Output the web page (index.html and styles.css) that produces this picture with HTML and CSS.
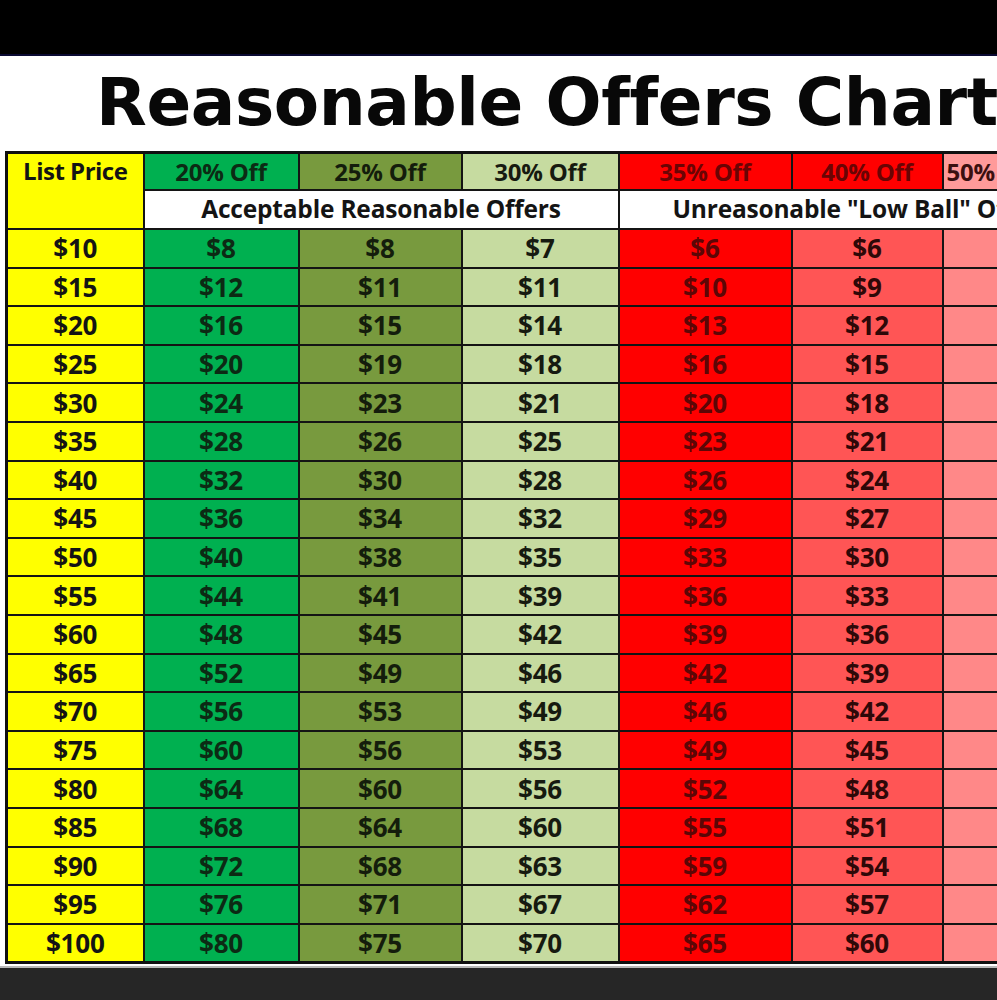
FILE: index.html
```html
<!DOCTYPE html>
<html lang="en">
<head>
<meta charset="utf-8">
<title>Reasonable Offers Chart</title>
<link rel="stylesheet" href="styles.css">
</head>
<body>
<div class="topbar"></div>
<main class="sheet">
  <h1 class="title">Reasonable Offers Chart</h1>
  <table class="chart">
    <colgroup>
      <col class="c-list"><col class="c20"><col class="c25"><col class="c30"><col class="c35"><col class="c40"><col class="c50">
    </colgroup>
    <thead>
      <tr class="h1row">
        <th class="list" rowspan="2">List Price</th>
        <th class="g20">20% Off</th>
        <th class="g25">25% Off</th>
        <th class="g30">30% Off</th>
        <th class="r35 hred">35% Off</th>
        <th class="r35 hred">40% Off</th>
        <th class="r50h left">50% Off</th>
      </tr>
      <tr class="h2row">
        <th class="sub" colspan="3">Acceptable Reasonable Offers</th>
        <th class="sub subleft" colspan="3">Unreasonable "Low Ball" Offers</th>
      </tr>
    </thead>
    <tbody>
      <tr><td class="list">$10</td><td class="g20">$8</td><td class="g25">$8</td><td class="g30">$7</td><td class="r35">$6</td><td class="r40">$6</td><td class="r50">$5</td></tr>
      <tr><td class="list">$15</td><td class="g20">$12</td><td class="g25">$11</td><td class="g30">$11</td><td class="r35">$10</td><td class="r40">$9</td><td class="r50">$8</td></tr>
      <tr><td class="list">$20</td><td class="g20">$16</td><td class="g25">$15</td><td class="g30">$14</td><td class="r35">$13</td><td class="r40">$12</td><td class="r50">$10</td></tr>
      <tr><td class="list">$25</td><td class="g20">$20</td><td class="g25">$19</td><td class="g30">$18</td><td class="r35">$16</td><td class="r40">$15</td><td class="r50">$13</td></tr>
      <tr><td class="list">$30</td><td class="g20">$24</td><td class="g25">$23</td><td class="g30">$21</td><td class="r35">$20</td><td class="r40">$18</td><td class="r50">$15</td></tr>
      <tr><td class="list">$35</td><td class="g20">$28</td><td class="g25">$26</td><td class="g30">$25</td><td class="r35">$23</td><td class="r40">$21</td><td class="r50">$18</td></tr>
      <tr><td class="list">$40</td><td class="g20">$32</td><td class="g25">$30</td><td class="g30">$28</td><td class="r35">$26</td><td class="r40">$24</td><td class="r50">$20</td></tr>
      <tr><td class="list">$45</td><td class="g20">$36</td><td class="g25">$34</td><td class="g30">$32</td><td class="r35">$29</td><td class="r40">$27</td><td class="r50">$23</td></tr>
      <tr><td class="list">$50</td><td class="g20">$40</td><td class="g25">$38</td><td class="g30">$35</td><td class="r35">$33</td><td class="r40">$30</td><td class="r50">$25</td></tr>
      <tr><td class="list">$55</td><td class="g20">$44</td><td class="g25">$41</td><td class="g30">$39</td><td class="r35">$36</td><td class="r40">$33</td><td class="r50">$28</td></tr>
      <tr><td class="list">$60</td><td class="g20">$48</td><td class="g25">$45</td><td class="g30">$42</td><td class="r35">$39</td><td class="r40">$36</td><td class="r50">$30</td></tr>
      <tr><td class="list">$65</td><td class="g20">$52</td><td class="g25">$49</td><td class="g30">$46</td><td class="r35">$42</td><td class="r40">$39</td><td class="r50">$33</td></tr>
      <tr><td class="list">$70</td><td class="g20">$56</td><td class="g25">$53</td><td class="g30">$49</td><td class="r35">$46</td><td class="r40">$42</td><td class="r50">$35</td></tr>
      <tr><td class="list">$75</td><td class="g20">$60</td><td class="g25">$56</td><td class="g30">$53</td><td class="r35">$49</td><td class="r40">$45</td><td class="r50">$38</td></tr>
      <tr><td class="list">$80</td><td class="g20">$64</td><td class="g25">$60</td><td class="g30">$56</td><td class="r35">$52</td><td class="r40">$48</td><td class="r50">$40</td></tr>
      <tr><td class="list">$85</td><td class="g20">$68</td><td class="g25">$64</td><td class="g30">$60</td><td class="r35">$55</td><td class="r40">$51</td><td class="r50">$43</td></tr>
      <tr><td class="list">$90</td><td class="g20">$72</td><td class="g25">$68</td><td class="g30">$63</td><td class="r35">$59</td><td class="r40">$54</td><td class="r50">$45</td></tr>
      <tr><td class="list">$95</td><td class="g20">$76</td><td class="g25">$71</td><td class="g30">$67</td><td class="r35">$62</td><td class="r40">$57</td><td class="r50">$48</td></tr>
      <tr><td class="list">$100</td><td class="g20">$80</td><td class="g25">$75</td><td class="g30">$70</td><td class="r35">$65</td><td class="r40">$60</td><td class="r50">$50</td></tr>
    </tbody>
  </table>
</main>
<div class="bottombar"></div>
</body>
</html>
```

FILE: styles.css
```css
html, body {
  margin: 0;
  padding: 0;
  background: #ffffff;
}
body {
  width: 997px;
  height: 1000px;
  overflow: hidden;
}
.topbar {
  height: 54px;
  background: #000000;
  border-bottom: 2px solid #0a0a32;
  box-shadow: 0 1px 0 #c8c8d0;
}
.sheet {
  background: #ffffff;
  padding: 0 0 0 5px;
  overflow: hidden;
  height: 910px;
}
.title {
  margin: 0;
  padding: 12px 0 0 91px;
  height: 95px;
  box-sizing: border-box;
  font-family: "DejaVu Sans", "Lato", sans-serif;
  font-weight: 700;
  font-size: 66px;
  line-height: 70px;
  color: #080808;
  white-space: nowrap;
  letter-spacing: -0.4px;
}
.chart {
  border-collapse: collapse;
  table-layout: fixed;
  width: 1100px;
  border: 3px solid #101010;
  font-family: "Open Sans", "Liberation Sans", sans-serif;
  font-weight: 700;
  font-size: 26px;
  color: #141414;
}
.c-list { width: 137px; }
.c20 { width: 155px; }
.c25 { width: 163px; }
.c30 { width: 157px; }
.c35 { width: 173px; }
.c40 { width: 151px; }
.c50 { width: 164px; }
.chart th, .chart td {
  border: 2px solid #141414;
  padding: 0;
  text-align: center;
  white-space: nowrap;
  overflow: hidden;
  line-height: 1;
}
.chart th { font-weight: 700; font-size: 24px; letter-spacing: -0.2px; }
.chart td { letter-spacing: -0.2px; }
.h1row th { height: 35px; }
.h2row th { height: 37px; }
.chart tbody td { height: 36.6px; }
.list { background: #ffff00; vertical-align: top; }
.chart thead .list { padding-top: 5px; vertical-align: top; letter-spacing: -0.5px; }
.chart tbody .list { vertical-align: middle; }
.g20 { background: #00b050; color: #0c2a14; }
.g25 { background: #789a3e; color: #141d0c; }
.g30 { background: #c6dba0; color: #161a10; }
.r35 { background: #ff0000; color: #5c0606; }
.r40 { background: #ff5555; color: #2e0808; }
.r50 { background: #ff8888; color: #301010; }
.hred { color: #6a0404; }
.r50h { background: #ff9a9a; color: #3a1010; }
.left { text-align: left !important; padding-left: 3px !important; }
.sub { background: #ffffff; color: #141414; font-size: 24.5px !important; letter-spacing: -0.2px !important; }
.subleft { text-align: left !important; padding-left: 53px !important; }
.bottombar {
  height: 32px;
  background: #262626;
  border-top: 2px solid #b8b8b8;
}
```
